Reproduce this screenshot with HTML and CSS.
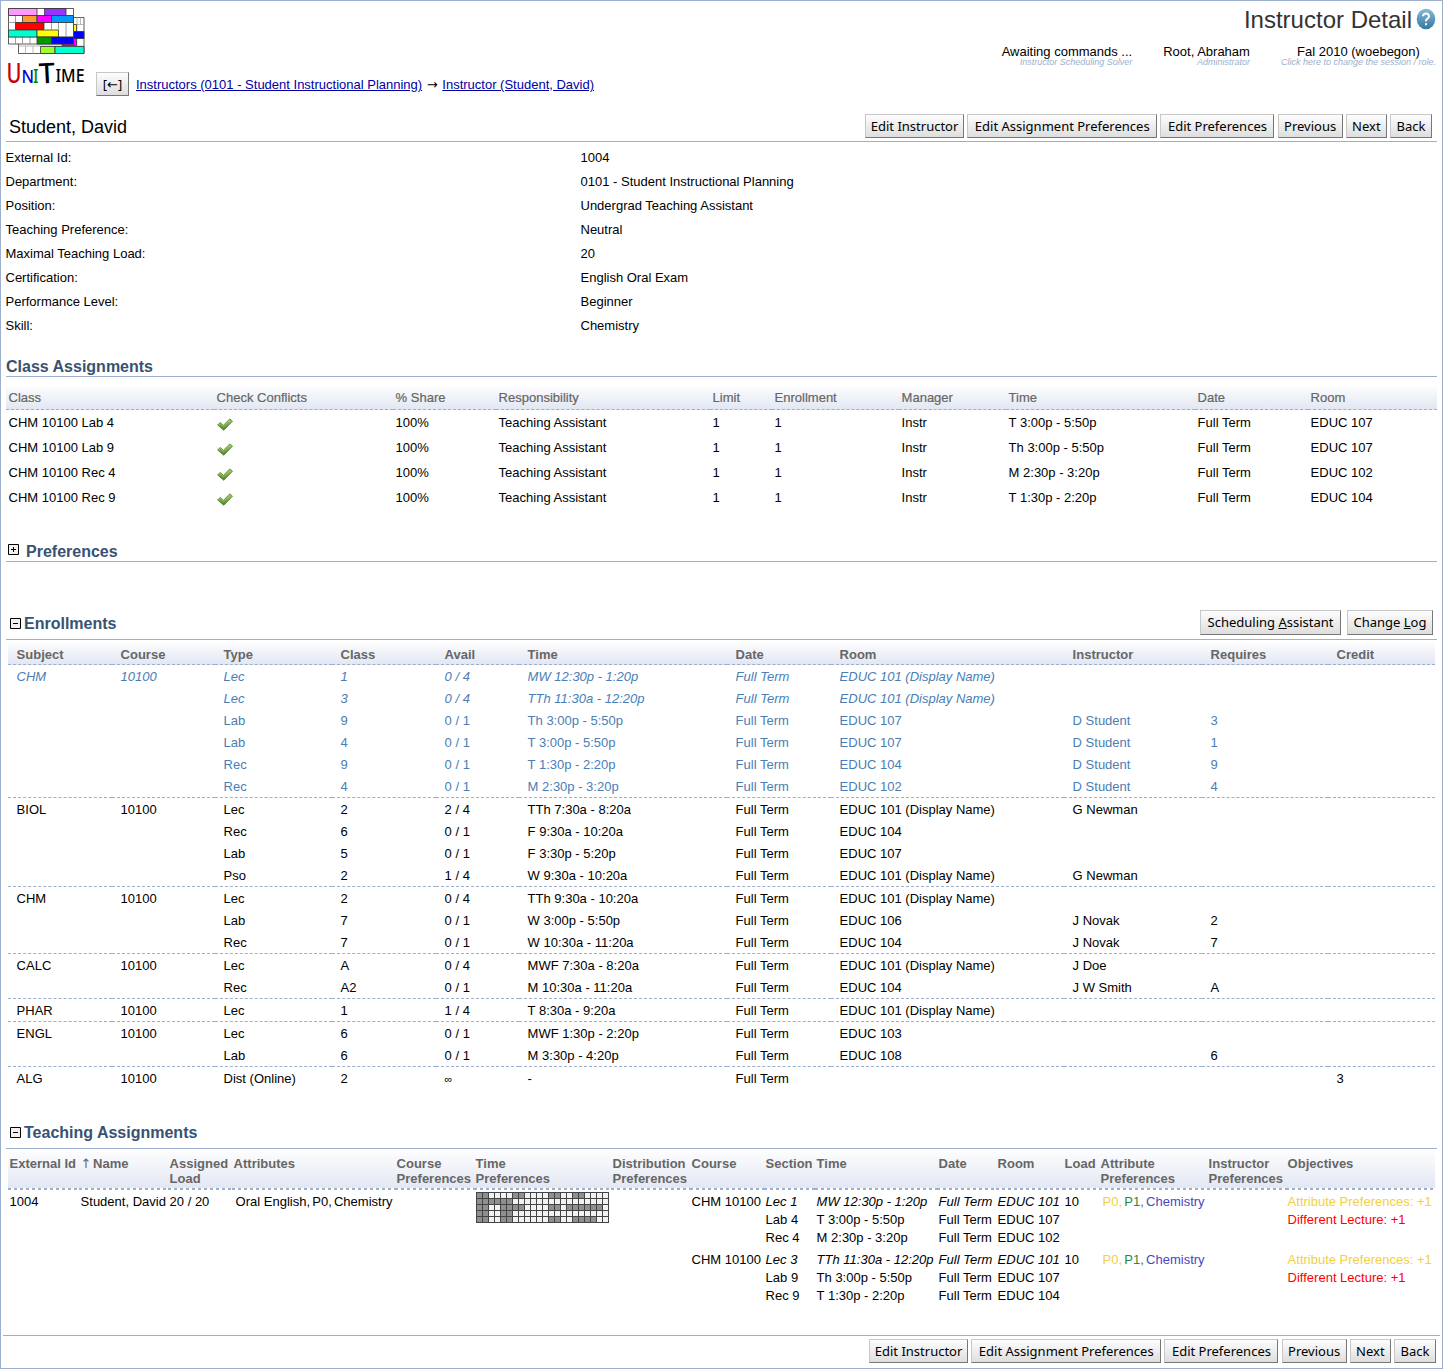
FILE: index.html
```html
<!DOCTYPE html>
<html lang="en">
<head>
<meta charset="utf-8">
<title>Instructor Detail</title>
<link rel="stylesheet" href="styles.css">
</head>
<body>
<svg class="defs" width="0" height="0" aria-hidden="true">
  <defs>
    <linearGradient id="leaf" x1="0" y1="0" x2="0" y2="1"><stop offset="0" stop-color="#a9cf78"/><stop offset="1" stop-color="#4d7f1e"/></linearGradient>
    <linearGradient id="sky" x1="0" y1="0" x2="0" y2="1"><stop offset="0" stop-color="#85bad6"/><stop offset="1" stop-color="#3579a0"/></linearGradient>
    <symbol id="check" viewBox="0 0 16 14"><path d="M.6 7 3.2 4.4 6.4 7.4 12.8.9 15.5 3.2 6.8 12.3Z" fill="url(#leaf)" stroke="#5d8a35" stroke-width=".9" stroke-linejoin="round"/><path d="M2 6.8 3.3 5.6 6.5 8.7 12.8 2.2" fill="none" stroke="#a9cf78" stroke-width=".6"/></symbol>
    <symbol id="plus" viewBox="0 0 11 11"><path d="M.5.5h10v10H.5z" fill="#f1f1f1" stroke="#000"/><path d="M3 5.5h5M5.5 3v5" stroke="#000"/></symbol>
    <symbol id="minus" viewBox="0 0 11 11"><path d="M.5.5h10v10H.5z" fill="#f1f1f1" stroke="#000"/><path d="M3 5.5h5" stroke="#000"/></symbol>
  </defs>
</svg>
<div class="page">
  <header class="top">
    <svg class="logo" width="80" height="100" viewBox="6 6 80 100">
      <g stroke="#333" stroke-width=".8">
        <path d="M18.500 17.500h65.500v36h-65.500z" fill="#fff"/>
        <path d="M73 24.500h11M73 31.500h11M73 38.500h11M18.500 46h66M25.500 46v7.500M33 46v7.500M77 17.500v28M80.500 17.500v7" fill="none" stroke="#aaa"/>
        <path d="M73 24.500h3.500v7H73z" fill="#ff0"/><path d="M73 31.500h11v7H73z" fill="#00f"/><path d="M62 38.500h14.500v7H62z" fill="#f0f"/>
        <path d="M40.500 46.500h14.500v7H40.500z" fill="#9f3"/><path d="M55 46.500h29v7H55z" fill="#00ffcf"/>
        <path d="M8.500 8.500h65v35.500h-65z" fill="#fff"/>
        <path d="M15.500 15.500v7M51.500 22.500v7M58.500 22.500v7M66 22.500v14M15.500 37v7M22.500 37v7M30 37v7M8.500 22.500h65M8.500 15.500h65M8.500 37h65" fill="none" stroke="#888"/>
        <path d="M8.500 8.500H37v7H8.500z" fill="#f9f"/><path d="M44.500 8.500H66v7H44.500z" fill="#93f"/>
        <path d="M22.500 15.500H37v7H22.500z" fill="#f93"/><path d="M37 15.500h14.500v7H37z" fill="#f0f"/><path d="M51.500 15.500h22v7h-22z" fill="#09f"/>
        <path d="M15.500 22.500H44v7H15.500z" fill="#f00"/>
        <path d="M8.500 30H37v7H8.500z" fill="#00ffcf"/><path d="M37 30h21.500v7H37z" fill="#ff0"/>
        <path d="M37 37h14.500v7H37z" fill="#090"/><path d="M51.500 37h22v7h-22z" fill="#00f"/>
      </g>
      <g class="wordmark">
        <text x="6.500" y="82.500" font-size="27" textLength="15" lengthAdjust="spacingAndGlyphs" fill="#c00">U</text>
        <text x="21.500" y="83" font-size="18" textLength="12.500" lengthAdjust="spacingAndGlyphs" fill="#00c">N</text>
        <text x="33" y="82.500" font-size="19" textLength="5.500" lengthAdjust="spacingAndGlyphs" fill="#080">I</text>
        <text x="39" y="83" font-size="28" textLength="16" lengthAdjust="spacingAndGlyphs" fill="#000" transform="rotate(-3 47 73)">T</text>
        <text x="55.500" y="82" font-size="18" textLength="29" lengthAdjust="spacingAndGlyphs" fill="#000">IME</text>
      </g>
    </svg>
    <nav class="crumbs">
      <button class="btn w-arrow">[<span class="arrow">←</span>]</button>
      <span><a href="#">Instructors (0101 - Student Instructional Planning)</a> <span class="arrow gap">→</span> <a href="#">Instructor (Student, David)</a></span>
    </nav>
    <div class="session">
      <h1>Instructor Detail
        <svg width="20" height="22" viewBox="0 0 20 22"><ellipse cx="10" cy="11" rx="9.300" ry="10.300" fill="url(#sky)"/><path d="M7 8.200Q7.200 5.500 10 5.500t3 2.700q0 1.500-1.600 2.500T10 13.300M10 15.300v2" fill="none" stroke="#fff" stroke-width="2"/></svg>
      </h1>
      <div class="status">
        <div class="s1"><b>Awaiting commands ...</b><i>Instructor Scheduling Solver</i></div>
        <div class="s2"><b>Root, Abraham</b><i>Administrator</i></div>
        <div class="s3"><b>Fal 2010 (woebegon)</b><i>Click here to change the session / role.</i></div>
      </div>
    </div>
  </header>

  <div class="bar name-bar">
    <h2>Student, David</h2>
    <div class="buttons"><button class="btn w1">Edit Instructor</button><button class="btn w2">Edit Assignment Preferences</button><button class="btn w3">Edit Preferences</button><button class="btn w4">Previous</button><button class="btn w5">Next</button><button class="btn w6">Back</button></div>
  </div>

  <dl class="info">
    <dt>External Id:</dt><dd>1004</dd>
    <dt>Department:</dt><dd>0101 - Student Instructional Planning</dd>
    <dt>Position:</dt><dd>Undergrad Teaching Assistant</dd>
    <dt>Teaching Preference:</dt><dd>Neutral</dd>
    <dt>Maximal Teaching Load:</dt><dd>20</dd>
    <dt>Certification:</dt><dd>English Oral Exam</dd>
    <dt>Performance Level:</dt><dd>Beginner</dd>
    <dt>Skill:</dt><dd>Chemistry</dd>
  </dl>

  <div class="bar class-bar"><h3>Class Assignments</h3></div>
  <table class="classes">
    <colgroup><col class="k1"><col class="k2"><col class="k3"><col class="k4"><col class="k5"><col class="k6"><col class="k7"><col class="k8"><col class="k9"><col></colgroup>
    <thead><tr><th>Class</th><th>Check Conflicts</th><th>% Share</th><th>Responsibility</th><th>Limit</th><th>Enrollment</th><th>Manager</th><th>Time</th><th>Date</th><th>Room</th></tr></thead>
    <tbody>
    <tr><td>CHM 10100 Lab 4</td><td><svg class="tick"><use href="#check"/></svg></td><td>100%</td><td>Teaching Assistant</td><td>1</td><td>1</td><td>Instr</td><td>T 3:00p - 5:50p</td><td>Full Term</td><td>EDUC 107</td></tr>
    <tr><td>CHM 10100 Lab 9</td><td><svg class="tick"><use href="#check"/></svg></td><td>100%</td><td>Teaching Assistant</td><td>1</td><td>1</td><td>Instr</td><td>Th 3:00p - 5:50p</td><td>Full Term</td><td>EDUC 107</td></tr>
    <tr><td>CHM 10100 Rec 4</td><td><svg class="tick"><use href="#check"/></svg></td><td>100%</td><td>Teaching Assistant</td><td>1</td><td>1</td><td>Instr</td><td>M 2:30p - 3:20p</td><td>Full Term</td><td>EDUC 102</td></tr>
    <tr><td>CHM 10100 Rec 9</td><td><svg class="tick"><use href="#check"/></svg></td><td>100%</td><td>Teaching Assistant</td><td>1</td><td>1</td><td>Instr</td><td>T 1:30p - 2:20p</td><td>Full Term</td><td>EDUC 104</td></tr>
    </tbody>
  </table>

  <div class="bar pref-bar"><svg class="fold"><use href="#plus"/></svg><h3>Preferences</h3></div>

  <div class="bar enroll-bar">
    <svg class="fold"><use href="#minus"/></svg><h3>Enrollments</h3>
    <div class="buttons"><button class="btn w7">Scheduling <u>A</u>ssistant</button><button class="btn w8">Change <u>L</u>og</button></div>
  </div>
  <table class="enrollments">
    <colgroup><col class="e1"><col class="e2"><col class="e3"><col class="e4"><col class="e5"><col class="e6"><col class="e7"><col class="e8"><col class="e9"><col class="e10"><col></colgroup>
    <thead><tr><th>Subject</th><th>Course</th><th>Type</th><th>Class</th><th>Avail</th><th>Time</th><th>Date</th><th>Room</th><th>Instructor</th><th>Requires</th><th>Credit</th></tr></thead>
    <tbody class="own">
    <tr class="it"><td>CHM</td><td>10100</td><td>Lec</td><td>1</td><td>0 / 4</td><td>MW 12:30p - 1:20p</td><td>Full Term</td><td>EDUC 101 (Display Name)</td><td></td><td></td><td></td></tr>
    <tr class="it"><td></td><td></td><td>Lec</td><td>3</td><td>0 / 4</td><td>TTh 11:30a - 12:20p</td><td>Full Term</td><td>EDUC 101 (Display Name)</td><td></td><td></td><td></td></tr>
    <tr><td></td><td></td><td>Lab</td><td>9</td><td>0 / 1</td><td>Th 3:00p - 5:50p</td><td>Full Term</td><td>EDUC 107</td><td>D Student</td><td>3</td><td></td></tr>
    <tr><td></td><td></td><td>Lab</td><td>4</td><td>0 / 1</td><td>T 3:00p - 5:50p</td><td>Full Term</td><td>EDUC 107</td><td>D Student</td><td>1</td><td></td></tr>
    <tr><td></td><td></td><td>Rec</td><td>9</td><td>0 / 1</td><td>T 1:30p - 2:20p</td><td>Full Term</td><td>EDUC 104</td><td>D Student</td><td>9</td><td></td></tr>
    <tr><td></td><td></td><td>Rec</td><td>4</td><td>0 / 1</td><td>M 2:30p - 3:20p</td><td>Full Term</td><td>EDUC 102</td><td>D Student</td><td>4</td><td></td></tr>
    </tbody>
    <tbody>
    <tr><td>BIOL</td><td>10100</td><td>Lec</td><td>2</td><td>2 / 4</td><td>TTh 7:30a - 8:20a</td><td>Full Term</td><td>EDUC 101 (Display Name)</td><td>G Newman</td><td></td><td></td></tr>
    <tr><td></td><td></td><td>Rec</td><td>6</td><td>0 / 1</td><td>F 9:30a - 10:20a</td><td>Full Term</td><td>EDUC 104</td><td></td><td></td><td></td></tr>
    <tr><td></td><td></td><td>Lab</td><td>5</td><td>0 / 1</td><td>F 3:30p - 5:20p</td><td>Full Term</td><td>EDUC 107</td><td></td><td></td><td></td></tr>
    <tr><td></td><td></td><td>Pso</td><td>2</td><td>1 / 4</td><td>W 9:30a - 10:20a</td><td>Full Term</td><td>EDUC 101 (Display Name)</td><td>G Newman</td><td></td><td></td></tr>
    </tbody>
    <tbody>
    <tr><td>CHM</td><td>10100</td><td>Lec</td><td>2</td><td>0 / 4</td><td>TTh 9:30a - 10:20a</td><td>Full Term</td><td>EDUC 101 (Display Name)</td><td></td><td></td><td></td></tr>
    <tr><td></td><td></td><td>Lab</td><td>7</td><td>0 / 1</td><td>W 3:00p - 5:50p</td><td>Full Term</td><td>EDUC 106</td><td>J Novak</td><td>2</td><td></td></tr>
    <tr><td></td><td></td><td>Rec</td><td>7</td><td>0 / 1</td><td>W 10:30a - 11:20a</td><td>Full Term</td><td>EDUC 104</td><td>J Novak</td><td>7</td><td></td></tr>
    </tbody>
    <tbody>
    <tr><td>CALC</td><td>10100</td><td>Lec</td><td>A</td><td>0 / 4</td><td>MWF 7:30a - 8:20a</td><td>Full Term</td><td>EDUC 101 (Display Name)</td><td>J Doe</td><td></td><td></td></tr>
    <tr><td></td><td></td><td>Rec</td><td>A2</td><td>0 / 1</td><td>M 10:30a - 11:20a</td><td>Full Term</td><td>EDUC 104</td><td>J W Smith</td><td>A</td><td></td></tr>
    </tbody>
    <tbody>
    <tr><td>PHAR</td><td>10100</td><td>Lec</td><td>1</td><td>1 / 4</td><td>T 8:30a - 9:20a</td><td>Full Term</td><td>EDUC 101 (Display Name)</td><td></td><td></td><td></td></tr>
    </tbody>
    <tbody>
    <tr><td>ENGL</td><td>10100</td><td>Lec</td><td>6</td><td>0 / 1</td><td>MWF 1:30p - 2:20p</td><td>Full Term</td><td>EDUC 103</td><td></td><td></td><td></td></tr>
    <tr><td></td><td></td><td>Lab</td><td>6</td><td>0 / 1</td><td>M 3:30p - 4:20p</td><td>Full Term</td><td>EDUC 108</td><td></td><td>6</td><td></td></tr>
    </tbody>
    <tbody>
    <tr><td>ALG</td><td>10100</td><td>Dist (Online)</td><td>2</td><td><span class="inf">∞</span></td><td>-</td><td>Full Term</td><td></td><td></td><td></td><td>3</td></tr>
    </tbody>
  </table>

  <div class="bar teach-bar"><svg class="fold"><use href="#minus"/></svg><h3>Teaching Assignments</h3></div>
  <table class="teaching">
    <colgroup><col class="t1"><col class="t2"><col class="t3"><col class="t4"><col class="t5"><col class="t6"><col class="t7"><col class="t8"><col class="t9"><col class="t10"><col class="t11"><col class="t12"><col class="t13"><col class="t14"><col class="t15"><col></colgroup>
    <thead><tr><th>External Id</th><th><span class="sort">↑</span> Name</th><th>Assigned<br>Load</th><th>Attributes</th><th>Course<br>Preferences</th><th>Time<br>Preferences</th><th>Distribution<br>Preferences</th><th>Course</th><th>Section</th><th>Time</th><th>Date</th><th>Room</th><th>Load</th><th>Attribute<br>Preferences</th><th>Instructor<br>Preferences</th><th>Objectives</th></tr></thead>
    <tbody>
    <tr><td>1004</td><td>Student, David</td><td>20 / 20</td><td class="attrs"><span>Oral English,</span> <span>P0,</span> <span>Chemistry</span></td><td></td>
      <td><svg class="times" width="133" height="31" viewBox="0 0 133 31"><path d="M0 0h133v31H0z" fill="#f2f2f2"/><path d="M0 0h12v31H0zM36 0h12v6H36zM72 0h12v6H72zM96 0h12v6H96zM12 6h24v6H12zM24 12h24v6H24zM72 12h12v6H72zM90 12h36v6H90zM24 18h12v12H24zM72 24h12v6H72zM96 24h24v6H96z" fill="#8f8f8f"/><path d="M0 .5h133M0 6.500h133M0 12.500h133M0 18.500h133M0 24.500h133M0 30.500h133M.5 0v31M6.500 0v31M12.500 0v31M18.500 0v31M24.500 0v31M30.500 0v31M36.500 0v31M42.500 0v31M48.500 0v31M54.500 0v31M60.500 0v31M66.500 0v31M72.500 0v31M78.500 0v31M84.500 0v31M90.500 0v31M96.500 0v31M102.500 0v31M108.500 0v31M114.500 0v31M120.500 0v31M126.500 0v31M132.500 0v31" stroke="#444"/></svg></td>
      <td></td><td>CHM 10100</td><td><i>Lec 1</i><br>Lab 4<br>Rec 4</td><td><i>MW 12:30p - 1:20p</i><br>T 3:00p - 5:50p<br>M 2:30p - 3:20p</td><td><i>Full Term</i><br>Full Term<br>Full Term</td><td><i>EDUC 101</i><br>EDUC 107<br>EDUC 102</td><td>10</td><td class="attrs"><span class="gold">P0,</span> <span class="green">P1,</span> <span class="indigo">Chemistry</span></td><td></td><td><span class="gold">Attribute Preferences: +1</span><br><span class="red">Different Lecture: +1</span></td></tr>
    <tr><td></td><td></td><td></td><td></td><td></td><td></td><td></td><td>CHM 10100</td><td><i>Lec 3</i><br>Lab 9<br>Rec 9</td><td><i>TTh 11:30a - 12:20p</i><br>Th 3:00p - 5:50p<br>T 1:30p - 2:20p</td><td><i>Full Term</i><br>Full Term<br>Full Term</td><td><i>EDUC 101</i><br>EDUC 107<br>EDUC 104</td><td>10</td><td class="attrs"><span class="gold">P0,</span> <span class="green">P1,</span> <span class="indigo">Chemistry</span></td><td></td><td><span class="gold">Attribute Preferences: +1</span><br><span class="red">Different Lecture: +1</span></td></tr>
    </tbody>
  </table>

  <footer class="buttons foot"><button class="btn w1">Edit Instructor</button><button class="btn w2">Edit Assignment Preferences</button><button class="btn w3">Edit Preferences</button><button class="btn w4">Previous</button><button class="btn w5">Next</button><button class="btn w6">Back</button></footer>
</div>
</body>
</html>
```
FILE: styles.css
```css
* { box-sizing: border-box; }
body { margin: 0; font: 13px/18px "Liberation Sans", Arial, sans-serif; color: #000; background: #fff; }
.defs { display: block; height: 0; }
.page { height: 1369px; border: 1px solid #9cb0ce; overflow: hidden; }
h1, h2, h3, dl, dd { margin: 0; }
h1, h2 { font-weight: normal; }

.top { display: flex; height: 112px; padding: 5px 0 0 5px; }
.logo { flex: none; display: block; overflow: visible; }
.wordmark { font-family: "Noto Sans", sans-serif; font-weight: 500; }
.crumbs { display: flex; align-items: center; gap: 7px; height: 26px; margin: 65px 0 0 10px; white-space: nowrap; }
.crumbs a { color: #0000a5; }
.crumbs > span { padding-top: 2px; }
.arrow { font-family: "DejaVu Sans", sans-serif; font-size: 13px; line-height: 1; }
.gap { margin: 0 1px; }
.session { flex: 1; color: #333; padding-right: 6px; }
.session h1 { display: flex; justify-content: flex-end; align-items: center; gap: 4px; height: 26px; padding-top: 1px; font-size: 24px; line-height: 26px; }
.session svg { margin-top: -2px; }
.status { display: flex; justify-content: flex-end; gap: 31px; margin-top: 13px; color: #000; white-space: nowrap; }
.status b { display: block; font-weight: normal; line-height: 13px; }
.status i { display: block; color: #9cb0ce; font-size: 9px; line-height: 8px; text-align: right; }
.s3 b { text-align: center; }

.btn { height: 24px; padding: 0; border: 1px solid; border-color: #c8c8c8 #777 #777 #c8c8c8; background: linear-gradient(#fdfdfd, #dedede); font: 13px/18px "Noto Sans", sans-serif; color: #000; white-space: nowrap; }
.buttons { display: flex; gap: 3.2px; }
.w-arrow { width: 33px; }
.w1 { width: 99px; } .w2 { width: 190px; } .w3 { width: 114px; } .w4 { width: 65px; } .w5 { width: 41px; } .w6 { width: 42px; }
.w7 { width: 141px; } .w8 { width: 86px; }

.bar { display: flex; align-items: center; margin: 0 5px; border-bottom: 1px solid #9cb0ce; }
.bar .buttons { margin-left: auto; }
h3 { font-size: 16px; line-height: 18px; color: #385272; }
.fold { width: 11px; height: 11px; flex: none; }
.name-bar { height: 29px; padding: 0 5px 2px 3px; }
.name-bar h2 { font-size: 18px; padding-top: 2px; }

.info { display: grid; grid-template-columns: 575px 1fr; grid-auto-rows: 24px; line-height: 24px; margin: 4px 5px 0 4.5px; }

.class-bar { height: 20px; margin-top: 19px; }
.pref-bar { height: 20px; margin-top: 32px; padding-left: 2px; gap: 7px; }
.pref-bar .fold { margin-bottom: 4px; }
.enroll-bar { height: 33px; margin-top: 45px; padding-left: 4px; gap: 3px; }
.enroll-bar .buttons { gap: 6px; padding-right: 4px; margin-top: -2px; }
.enroll-bar .btn { height: 25px; }
.enroll-bar h3, .teach-bar h3 { padding-top: 2px; }
.teach-bar { height: 33px; margin-top: 27px; padding-left: 4px; gap: 3px; }

table { table-layout: fixed; border-collapse: separate; border-spacing: 0; white-space: nowrap; }
th { text-align: left; color: #666; padding: 0; }
td { padding: 0; }
thead { background: linear-gradient(#fdfdfe, #e1e6f2); }
th { border-bottom: 1px dashed #9cb0ce; }

.classes { width: 1431px; margin: 9px 5px 0; }
.classes th, .classes td { height: 25px; padding: 0 0 0 2.6px; }
.classes th { height: 24px; font-weight: normal; -webkit-text-stroke: .2px #666; }
.tick { display: block; width: 16px; height: 14px; margin-top: 4px; }
.k1 { width: 208px; } .k2 { width: 179px; } .k3 { width: 103px; } .k4 { width: 214px; } .k5 { width: 62px; }
.k6 { width: 127px; } .k7 { width: 107px; } .k8 { width: 189px; } .k9 { width: 113px; }

.enrollments { width: 1427px; margin: 2px 7px 0; }
.enrollments th, .enrollments td { height: 22px; padding: 2px 0 0 8.6px; }
.enrollments th { height: 23px; padding-top: 4px; }
.enrollments tbody + tbody tr:first-child td { height: 23px; border-top: 1px dashed #9cb0ce; }
.own { color: #4a7eb5; }
.it { font-style: italic; }
.inf { font-size: 11px; }
.e1 { width: 104px; } .e2 { width: 103px; } .e3 { width: 117px; } .e4 { width: 104px; } .e5 { width: 83px; } .e6 { width: 208px; }
.e7 { width: 104px; } .e8 { width: 233px; } .e9 { width: 138px; } .e10 { width: 126px; }

.teaching { width: 1427px; margin: 2px 7px 0; }
.teaching th { height: 39px; padding: 5px 0 0 1.6px; border: 0; background: repeating-linear-gradient(90deg, #9cb0ce 0 3px, #fff 3px 6px) 0 100% / 100% 2px no-repeat; vertical-align: top; line-height: 15px; }
.teaching td { height: 58px; padding: 3px 0 0 1.6px; vertical-align: top; }
.teaching .attrs { padding-left: 3.6px; word-spacing: -1.4px; }
.attrs span { word-spacing: 0; }
.sort { font: 13px/1 "DejaVu Sans", sans-serif; margin-right: -2px; }
.times { display: block; margin: -1px 0 0 .4px; }
.gold { color: #f3cf45; } .green { color: #2a8a3c; } .indigo { color: #4b45c0; } .red { color: #f00; }
.t1 { width: 71px; } .t2 { width: 89px; } .t3 { width: 64px; } .t4 { width: 163px; } .t5 { width: 79px; } .t6 { width: 137px; }
.t7 { width: 79px; } .t8 { width: 74px; } .t9 { width: 51px; } .t10 { width: 122px; } .t11 { width: 59px; } .t12 { width: 67px; }
.t13 { width: 36px; } .t14 { width: 108px; } .t15 { width: 79px; }

.foot { justify-content: flex-end; margin: 29px 2px 0; padding: 3px 4px 0 0; border-top: 1px solid #9cb0ce; }
```
